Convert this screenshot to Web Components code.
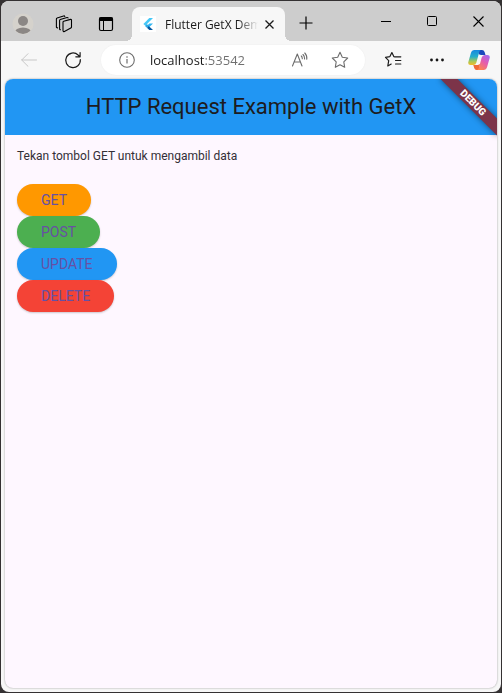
<!DOCTYPE html>
<html lang="id">
<head>
<meta charset="utf-8">
<meta name="viewport" content="width=device-width, initial-scale=1">
<title>Flutter GetX Demo</title>
<style>
  html, body { height: 100%; margin: 0; }
  body { background: #343132; font-family: "Open Sans", "Noto Sans", sans-serif; color: #1b1b1b; }
</style>
</head>
<body>
<browser-window>
  <title-bar slot="title">
    <browser-tab>Flutter GetX Demo</browser-tab>
  </title-bar>
  <tool-bar slot="tools">
    <address-box value="localhost:53542"></address-box>
  </tool-bar>
  <flutter-app heading="HTTP Request Example with GetX">
    <span slot="message">Tekan tombol GET untuk mengambil data</span>
    <pill-button style="--fill:#ff9800">GET</pill-button>
    <pill-button style="--fill:#4caf50">POST</pill-button>
    <pill-button style="--fill:#2196f3">UPDATE</pill-button>
    <pill-button style="--fill:#f44336">DELETE</pill-button>
  </flutter-app>
</browser-window>

<script>
const reset = `
  *, *::before, *::after { box-sizing: border-box; }
  :host { box-sizing: border-box; }
  button { border: 0; padding: 0; margin: 0; background: none; color: inherit; font: inherit; display: grid; place-items: center; }
  svg { display: block; fill: none; stroke: currentColor; }
  svg.solid { stroke: none; }
`;
function define(name, markup, setup) {
  const template = document.createElement("template");
  template.innerHTML = markup;
  customElements.define(name, class extends HTMLElement {
    constructor() {
      super();
      this.attachShadow({ mode: "open" }).append(template.content.cloneNode(true));
    }
    connectedCallback() { if (setup) setup(this, this.shadowRoot); }
  });
}

define("browser-window", `
  <style>${reset}
    :host { display: block; height: 100%; padding: 1px; }
    .frame { display: flex; flex-direction: column; height: 100%; background: #f7f7f7; border-radius: 8px; overflow: hidden; }
    main { flex: 1; min-height: 0; padding: 0 4px 4px; }
  </style>
  <div class="frame">
    <slot name="title"></slot>
    <slot name="tools"></slot>
    <main><slot></slot></main>
  </div>`);

define("title-bar", `
  <style>${reset}
    :host { display: flex; height: 40px; background: #cdcdcd; color: #000; }
    button { flex: none; }
    .side { width: 42px; padding-top: 6px; }
    .profile { padding-left: 2px; }
    .add { width: 42px; padding-top: 4px; }
    .win { width: 46px; }
    .gap { flex: 1; }
    .tab { display: flex; flex: none; padding-top: 6px; margin-left: 5px; }
  </style>
  <button class="side profile" aria-label="Profil">
    <svg class="solid" width="22" height="22" viewBox="0 0 22 22"><defs><clipPath id="c"><circle cx="11" cy="11" r="10"/></clipPath></defs><circle cx="11" cy="11" r="10.500" fill="#d5d2cc"/><g clip-path="url(#c)" fill="#8b8785"><circle cx="11" cy="8" r="5"/><ellipse cx="11" cy="20" rx="8.500" ry="5.500"/></g></svg>
  </button>
  <button class="side" aria-label="Ruang kerja">
    <svg width="18" height="18" viewBox="0 0 18 18" stroke-width="1.100" stroke-linejoin="round" stroke-linecap="round"><path d="M8 7.200q0-.7.700-.9l6.800-1.900q1-.2 1 .8v6.900q0 .7-.7 1l-6.400 3.300q-1.400.600-1.400-.8z"/><path d="M5.600 14.800q-1 .1-1-1V5.500q0-.8.700-1l6.700-2q.8-.2 1.100.5M2.600 12.900q-1.200.1-1.200-1V4q0-.8.700-1L8.600.9q.9-.3 1.200.6"/></svg>
  </button>
  <button class="side" aria-label="Menu tab">
    <svg width="16" height="16" viewBox="0 0 16 16"><rect x="1.500" y="1.500" width="13" height="13" rx="1.500" stroke-width="1.200"/><path d="M1.500 3.200h13" stroke-width="3.400"/><path d="M5.500 5v9.500"/></svg>
  </button>
  <div class="tab"><slot></slot></div>
  <button class="add" aria-label="Tab baru">
    <svg width="14" height="14" viewBox="0 0 14 14"><path d="M7 .5v13M.5 7h13" stroke-width="1.200"/></svg>
  </button>
  <div class="gap"></div>
  <button class="win" aria-label="Perkecil"><svg width="10" height="10"><path d="M0 5.500h10"/></svg></button>
  <button class="win" aria-label="Perbesar"><svg width="10" height="10"><rect x=".5" y=".5" width="9" height="9" rx="1"/></svg></button>
  <button class="win" aria-label="Tutup jendela"><svg width="11" height="11"><path d="m.5.500 10 10m0-10-10 10" stroke-width="1.100"/></svg></button>`);

define("browser-tab", `
  <style>${reset}
    :host { display: flex; align-items: center; position: relative; width: 153px; height: 34px; padding: 0 5px 0 8px; background: #f7f7f7; border-radius: 8px 8px 0 0; font-size: 12px; color: #1b1b1b; }
    :host::before, :host::after { content: ""; position: absolute; bottom: 0; width: 6px; height: 6px; }
    :host::before { right: 100%; background: radial-gradient(circle at 0 0, #0000 6px, #f7f7f7 6px); }
    :host::after { left: 100%; background: radial-gradient(circle at 100% 0, #0000 6px, #f7f7f7 6px); }
    .icon { flex: none; width: 16px; height: 16px; background: #fff; }
    .label { flex: 1; min-width: 0; margin-left: 9px; white-space: nowrap; overflow: hidden; -webkit-mask-image: linear-gradient(90deg, #000 calc(100% - 20px), #0000 100%); mask-image: linear-gradient(90deg, #000 calc(100% - 20px), #0000 100%); }
    button { flex: none; width: 22px; height: 22px; }
  </style>
  <svg class="icon solid" viewBox="0 0 16 16"><path d="M9.300 2h3.700L5.300 9.700 3.400 7.900z" fill="#45c8f7"/><path d="M9.300 7.400H13L8.700 11.700 6.900 9.900z" fill="#32b6f1"/><path d="m6.900 11.700 1.800-1.800L13 14H9.300z" fill="#07579f"/><path d="m5 9.900 1.900-1.800 1.800 1.800-1.800 1.800z" fill="#2aa9e8"/></svg>
  <span class="label"><slot></slot></span>
  <button aria-label="Tutup tab"><svg width="9" height="9"><path d="m.5.500 8 8m0-8-8 8" stroke-width="1.300"/></svg></button>`);

define("tool-bar", `
  <style>${reset}
    :host { display: flex; height: 38px; align-items: center; }
    button { flex: none; width: 44px; height: 38px; }
    .back { color: #c7c7c7; margin-left: 6px; }
    ::slotted(*) { flex: 1; min-width: 0; margin-left: 6px; margin-right: 6px; }
    .copilot { width: 42px; padding-right: 2px; }
  </style>
  <button class="back" aria-label="Kembali" disabled><svg width="16" height="14" viewBox="0 0 16 14" stroke-linecap="round" stroke-linejoin="round"><path d="M15.500 7H.7M7 .7.7 7 7 13.300"/></svg></button>
  <button aria-label="Muat ulang"><svg width="18" height="18" viewBox="0 0 18 18" stroke-width="1.200" stroke-linecap="round" stroke-linejoin="round"><path d="M16.300 8.600A7.300 7.300 0 1 1 14.100 4L16 5.700M16.100 1.500v4.300h-4.300"/></svg></button>
  <slot></slot>
  <button aria-label="Favorit"><svg width="18" height="18" viewBox="0 0 18 18" stroke-width="1.200" stroke-linecap="round" stroke-linejoin="round"><path d="M11 5.800 9.800 5.600 7.900 1.600 5.900 5.600 1.500 6.300l3.200 3.300-.9 5.400 3.400-1.900M11 5.800h5.800M11.500 9.500h5.300M11.500 13h5.300"/></svg></button>
  <button aria-label="Lainnya"><svg class="solid" width="16" height="4" viewBox="0 0 16 4"><g fill="#151515"><circle cx="2.500" cy="2" r="1.400"/><circle cx="8" cy="2" r="1.400"/><circle cx="13.500" cy="2" r="1.400"/></g></svg></button>
  <button class="copilot" aria-label="Copilot"><svg class="solid" width="22" height="22" viewBox="0 0 22 22">
    <defs>
      <linearGradient id="a" x1="0" y1="0" x2="0" y2="1"><stop stop-color="#1688e0"/><stop offset=".45" stop-color="#26afca"/><stop offset=".75" stop-color="#a5c85a"/><stop offset="1" stop-color="#f4bc24"/></linearGradient>
      <linearGradient id="b" x1=".8" y1="0" x2=".2" y2="1"><stop stop-color="#a76aef"/><stop offset=".45" stop-color="#e45bb0"/><stop offset="1" stop-color="#ff8747"/></linearGradient>
    </defs>
    <path d="M11 1h3q2 0 2.600 2l.9 3H13q-2 0-2.600-2z" fill="#1c48bd"/><path d="M11 21H8.500q-1.700 0-2.300-2l-.9-3H10l2-1z" fill="#f06a37"/>
    <path d="M6.500 1h6.300q-1.100.6-1.600 2.300L8.400 13.500Q7.700 16 5.300 16H2.600Q-.5 16 .4 12.800L2.900 4Q3.700 1 6.500 1" fill="url(#a)"/>
    <path d="M15.500 21H9.300q1.100-.6 1.600-2.300l2.800-10.200Q14.400 6 16.800 6h2.600q3.100 0 2.200 3.200L19.100 18q-.8 3-3.600 3" fill="url(#b)"/>
  </svg></button>`);

define("address-box", `
  <style>${reset}
    :host { display: flex; align-items: center; height: 30px; background: #fff; border-radius: 15px; box-shadow: 0 0 2px #0000000d; color: #6d6d6d; }
    button { flex: none; width: 40px; height: 30px; }
    .info { width: 48px; padding-left: 4px; }
    .star { margin-right: 5px; }
    input { flex: 1; min-width: 0; width: 0; height: 28px; padding: 0 1px; border: 0; outline: 0; font: 13px "Open Sans", "Noto Sans", sans-serif; color: #1b1b1b; -webkit-text-fill-color: transparent; background: linear-gradient(90deg, #1b1b1b 56px, #6f6f6f 56px); -webkit-background-clip: text; background-clip: text; }
  </style>
  <button class="info" aria-label="Informasi situs"><svg width="16" height="16" viewBox="0 0 16 16"><circle cx="8" cy="8" r="7.300" stroke-width="1.100"/><path d="M8 7v4.500M8 4.300v1.400" stroke-width="1.200"/></svg></button>
  <input type="text" aria-label="Alamat" spellcheck="false">
  <button aria-label="Baca keras"><svg width="18" height="16" viewBox="0 0 18 16" stroke-width="1.100" stroke-linecap="round" stroke-linejoin="round"><path d="M1.500 14 6.300 2l4.700 12M3.300 10h6.200M10.300 4q1 1 1 2.700M12 2.500q1.700 1.700 1.600 4.500M13.800 1q2.400 2.400 2 6.300"/></svg></button>
  <button class="star" aria-label="Tambahkan ke favorit"><svg width="18" height="18" viewBox="0 0 18 18" stroke-width="1.100" stroke-linejoin="round"><path d="m9 1.300 2.300 5 5.400.7-3.900 3.800.9 5.500L9 13.700l-4.700 2.600.9-5.500L1.300 7l5.400-.7z"/></svg></button>`,
  (host, root) => { root.querySelector("input").value = host.getAttribute("value"); });

define("flutter-app", `
  <style>${reset}
    :host { display: flex; flex-direction: column; position: relative; height: 100%; overflow: hidden; background: #fef7ff; border-radius: 8px; box-shadow: 0 0 2px #00000066; font-family: Roboto, sans-serif; color: #1d1b20; }
    header { flex: none; height: 56px; display: grid; place-items: center; background: #2196f3; }
    h1 { margin: 0; font-size: 22px; line-height: 28px; font-weight: 400; }
    .body { display: flex; flex-direction: column; align-items: flex-start; padding: 12px; }
    p { margin: 0 0 19px; font-size: 12px; line-height: 18px; color: #332f37; }
    .ribbon { position: absolute; top: 18px; right: -16px; width: 80px; height: 12px; transform: rotate(45deg); background: #7c3449; box-shadow: 0 0 6px #0000007f; color: #fff; font-size: 10px; line-height: 12px; font-weight: 900; text-align: center; }
  </style>
  <header><h1></h1></header>
  <div class="body"><p><slot name="message"></slot></p><slot></slot></div>
  <div class="ribbon">DEBUG</div>`,
  (host, root) => { root.querySelector("h1").textContent = host.getAttribute("heading"); });

define("pill-button", `
  <style>${reset}
    :host { display: block; }
    button { height: 32px; padding: 0 24px; border-radius: 16px; background: var(--fill); color: #6750a4; font: 400 14px/20px Roboto, sans-serif; box-shadow: 0 1px 2px #00000033; }
  </style>
  <button type="button"><slot></slot></button>`);
</script>
</body>
</html>
